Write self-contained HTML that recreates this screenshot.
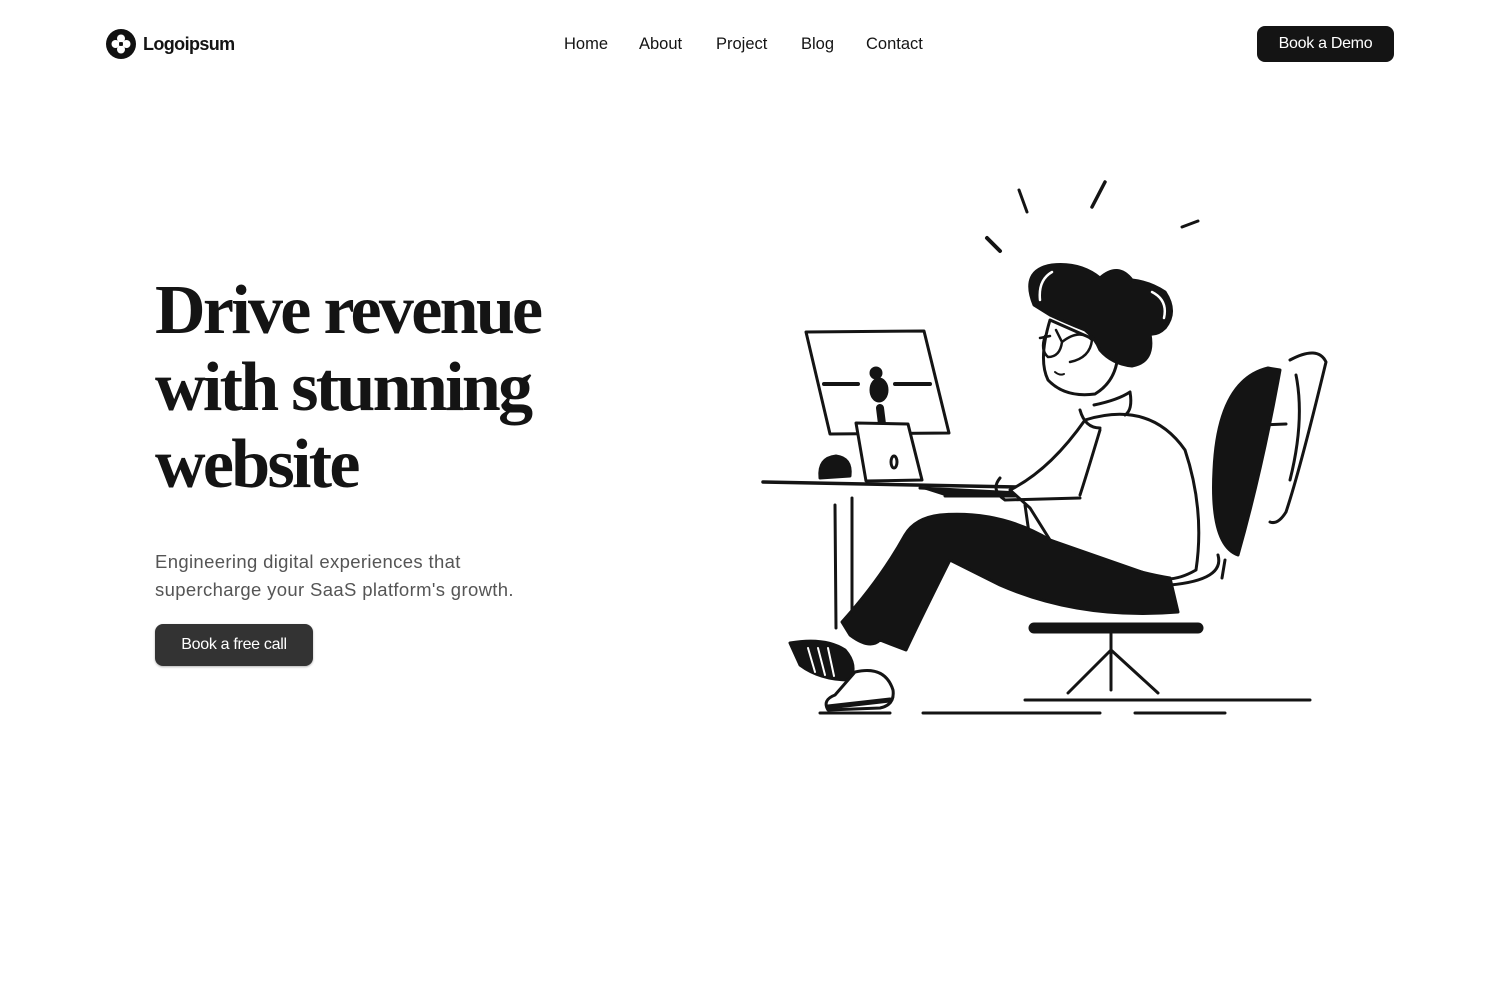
<!DOCTYPE html>
<html><head><meta charset="utf-8"><style>
*{margin:0;padding:0;box-sizing:border-box}
body{width:1500px;height:1000px;background:#fff;font-family:"Liberation Sans",sans-serif;color:#141414;position:relative;overflow:hidden}
.logo{position:absolute;left:106px;top:29px;display:flex;align-items:center;gap:7px;font-weight:bold;font-size:18px;letter-spacing:-0.6px}
nav{position:absolute;top:35px;left:564px;font-size:16.5px}
nav a{color:#141414;text-decoration:none;position:absolute;white-space:nowrap}
.demo{position:absolute;left:1257px;top:26px;width:137px;height:36px;background:#141414;color:#fff;border-radius:8px;font-size:16px;display:flex;align-items:center;justify-content:center;letter-spacing:-0.3px}
h1{position:absolute;left:155px;top:272px;font-family:"Liberation Serif",serif;font-weight:bold;font-size:70px;line-height:77px;letter-spacing:-2.7px;color:#141414}
p{position:absolute;left:155px;top:548px;font-size:18.5px;line-height:28px;color:#555;width:380px;letter-spacing:0.35px}
.call{position:absolute;left:155px;top:624px;width:158px;height:42px;background:#333;color:#fff;border-radius:8px;font-size:16px;display:flex;align-items:center;justify-content:center;letter-spacing:-0.3px;box-shadow:0 1px 2px rgba(0,0,0,.3)}
svg.ill{position:absolute;left:0;top:0}
</style></head><body>
<div class="logo"><svg width="30" height="30" viewBox="0 0 30 30"><circle cx="15" cy="15" r="15" fill="#111"/><circle cx="15" cy="9.5" r="4" fill="#fff"/><circle cx="15" cy="20.5" r="4" fill="#fff"/><circle cx="9.5" cy="15" r="4" fill="#fff"/><circle cx="20.5" cy="15" r="4" fill="#fff"/><circle cx="15" cy="15" r="2" fill="#111"/></svg>Logoipsum</div>
<nav><a style="left:0">Home</a><a style="left:75px">About</a><a style="left:152px">Project</a><a style="left:237px">Blog</a><a style="left:302px">Contact</a></nav>
<div class="demo">Book a Demo</div>
<h1>Drive revenue<br>with stunning<br>website</h1>
<p>Engineering digital experiences that supercharge your SaaS platform's growth.</p>
<div class="call">Book a free call</div>
<svg class="ill" width="1500" height="1000" viewBox="0 0 1500 1000" fill="none" stroke="#141414" stroke-width="3" stroke-linecap="round" stroke-linejoin="round">
<path d="M1019 190 L1027 212"/>
<path d="M1105 182 L1092 207" stroke-width="3.5"/>
<path d="M1182 227 L1198 221"/>
<path d="M987 238 L1000 251" stroke-width="4"/>
<path d="M806 332 L924 331 L949 433 L830 434 Z" fill="#fff"/>
<path d="M824 384 L858 384 M895 384 L930 384" stroke-width="4"/>
<circle cx="876" cy="373" r="5" fill="#141414"/>
<ellipse cx="879" cy="390" rx="8" ry="11" fill="#141414"/>
<path d="M880 408 L882 424" stroke-width="8"/>
<path d="M856 423 L908 424 L922 480 L866 481 Z" fill="#fff"/>
<ellipse cx="894" cy="462" rx="3" ry="6"/>
<path d="M820 478 Q818 458 836 456 Q852 458 850 476 Z" fill="#141414"/>
<path d="M763 482 L1070 488" stroke-width="3.5"/>
<path d="M920 488 L1020 493 L1020 496 L945 496" fill="#141414"/>
<path d="M835 505 L836 628 M852 498 L852 610"/>
<path d="M1268 368 Q1218 380 1214 470 Q1210 545 1238 555 Q1262 470 1280 370 Z" fill="#141414"/>
<path d="M1290 360 Q1318 345 1326 362 Q1300 470 1286 512 Q1278 525 1270 522 M1296 375 Q1305 420 1290 480"/>
<path d="M1258 425 L1286 424"/>
<path d="M1218 555 Q1225 580 1170 585 M1225 560 L1222 578"/>
<path d="M1034 628 L1198 628" stroke-width="11"/>
<path d="M1111 634 L1111 690 M1111 650 L1068 693 M1111 650 L1158 693"/>
<path d="M1025 700 L1310 700 M923 713 L1100 713 M1135 713 L1225 713 M820 713 L890 713"/>
<path d="M1085 420 Q1150 400 1185 450 Q1205 510 1196 570 Q1170 585 1150 575 L1050 540 L1030 508 L1010 490 Q1050 470 1085 420 Z" fill="#fff"/>
<path d="M1080 410 Q1085 428 1100 428 M1094 405 Q1118 400 1130 392 Q1133 410 1125 415"/>
<path d="M1100 430 Q1085 480 1080 495 M1000 478 Q990 490 1005 500 L1080 498 M1025 505 L1030 540"/>
<path d="M940 515 Q1000 510 1050 540 Q1120 570 1170 578 L1178 612 Q1080 620 1000 585 L950 560 Q920 620 906 650 L880 640 Q870 650 850 635 L842 622 Q880 580 905 535 Q915 518 940 515 Z" fill="#141414"/>
<path d="M790 643 Q825 637 845 650 Q858 665 850 680 Q820 680 800 665 Z" fill="#141414"/>
<path d="M808 648 L815 672 M818 648 L825 675 M828 648 L834 676" stroke="#fff" stroke-width="2"/>
<path d="M855 672 Q885 665 893 690 Q895 705 880 708 L828 710 Q822 700 835 695 Z" fill="#fff"/>
<path d="M828 707 L890 700" stroke-width="5"/>
<path d="M1050 320 Q1038 360 1048 380 Q1065 398 1095 394 Q1118 380 1118 350 Z" fill="#fff"/>
<path d="M1034 305 Q1020 270 1052 265 Q1080 262 1100 278 Q1118 262 1132 280 Q1150 282 1165 292 Q1178 312 1165 328 Q1158 335 1150 334 Q1155 362 1132 366 Q1112 364 1100 350 Q1095 338 1085 330 Q1065 322 1050 315 Z" fill="#141414"/>
<path d="M1040 300 Q1038 280 1052 272 M1152 292 Q1168 300 1164 318" stroke="#fff" stroke-width="2.5"/>
<path d="M1045 336 Q1040 350 1048 357 Q1060 357 1062 342 Q1080 328 1092 340 Q1090 358 1070 362 M1062 342 L1056 330 M1040 338 L1050 336" stroke-width="2.5"/>
<path d="M1055 372 Q1060 376 1064 374" stroke-width="2"/>
</svg>
</body></html>
